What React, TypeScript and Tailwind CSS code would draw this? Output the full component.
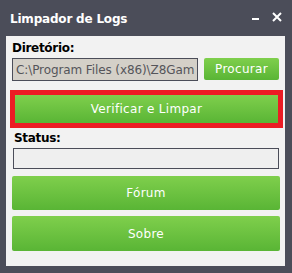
const GreenButton = ({ label, className }: { label: string; className: string }) => (
  <button
    type="button"
    className={`flex items-center justify-center rounded-[2px] bg-gradient-to-b from-[#7fcf4c] to-[#59b535] text-white text-[12px] tracking-[0.3px] ${className}`}
  >
    {label}
  </button>
);

const App = () => {
  return (
    <div
      className="w-[292px] h-[273px] bg-[#4b4d59] flex flex-col"
      style={{ fontFamily: '"DejaVu Sans", "Liberation Sans", sans-serif' }}
    >
      {/* Title bar */}
      <div className="h-[36px] flex items-center pl-[10px] pr-[10px] text-white">
        <span className="text-[12px] font-bold tracking-[-0.2px] mt-[2px]">Limpador de Logs</span>
        <div className="ml-auto flex items-center gap-[13px]">
          <span className="block w-[7px] h-[2px] bg-white mt-[2px]" />
          <svg width="10" height="10" viewBox="0 0 10 10" className="mb-[2px]">
            <path d="M1 1 L9 9 M9 1 L1 9" stroke="white" strokeWidth="2" />
          </svg>
        </div>
      </div>

      {/* Panel */}
      <div className="ml-[6px] mr-[7px] h-[230px] bg-[#f2f2f2] flex flex-col text-black">
        <div className="ml-[6px] mt-[5px] h-[14px] flex items-center">
          <span className="text-[12px] font-bold tracking-[-0.3px]">Diretório:</span>
        </div>
        <div className="ml-[6px] mt-[3px] flex gap-[6px]">
          <div className="w-[186px] h-[23px] border border-[#4b4d59] bg-[#d4d0c8] overflow-hidden whitespace-nowrap pl-[3px] flex items-center">
            <span className="text-[12px] text-[#55555a] tracking-[-0.1px]">C:\Program Files (x86)\Z8Gam</span>
          </div>
          <GreenButton label="Procurar" className="w-[75px] h-[22px]" />
        </div>

        <div className="ml-[4px] mt-[9px] w-[273px] h-[38px] border-[5px] border-[#ec1c24] flex">
          <GreenButton label="Verificar e Limpar" className="flex-1 rounded-none" />
        </div>

        <div className="ml-[8px] mt-[2px] h-[16px] flex items-center">
          <span className="text-[12px] font-bold tracking-[-0.3px]">Status:</span>
        </div>
        <div className="ml-[7px] mt-[2px] w-[266px] h-[21px] border border-[#4b4d59] bg-[#efefef]" />

        <GreenButton label="Fórum" className="ml-[6px] mt-[7px] w-[268px] h-[34px]" />
        <GreenButton label="Sobre" className="ml-[6px] mt-[6px] w-[268px] h-[35px]" />
      </div>
    </div>
  );
};

export default App;
